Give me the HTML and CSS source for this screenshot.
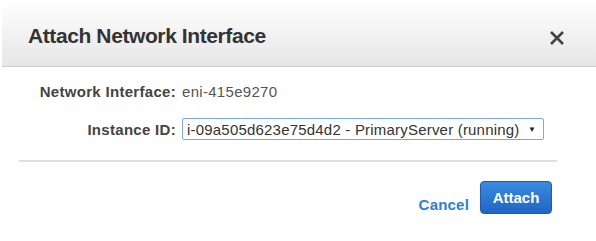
FILE: index.html
```html
<!DOCTYPE html>
<html lang="en">
<head>
<meta charset="UTF-8">
<title>Attach Network Interface</title>
<link rel="stylesheet" href="styles.css">
</head>
<body>

<div class="dialog">
  <div class="dialog-header">
    <h2>Attach Network Interface</h2>
    <span class="close">
      <svg width="16" height="16" viewBox="0 0 16 16"><path d="M2 2 L14 14 M14 2 L2 14" stroke="#444" stroke-width="2.6"/></svg>
    </span>
  </div>

  <div class="dialog-body">
    <div class="field">
      <span class="label">Network Interface:</span>
      <span class="value">eni-415e9270</span>
    </div>
    <div class="field">
      <label class="label" for="instance">Instance ID:</label>
      <div class="select-box" id="instance">
        <span>i-09a505d623e75d4d2 - PrimaryServer (running)</span>
        <span class="arrow">&#9660;</span>
      </div>
    </div>
  </div>

  <div class="dialog-footer">
    <a class="cancel" href="#">Cancel</a>
    <button type="button" class="attach">Attach</button>
  </div>
</div>

</body>
</html>
```

FILE: styles.css
```css
body {
  margin: 0;
  font-family: "Liberation Sans", Arial, sans-serif;
  background: #fff;
}
.dialog-header {
  height: 67px;
  box-sizing: border-box;
  margin-left: 2px;
  display: flex;
  align-items: center;
  justify-content: space-between;
  padding: 6px 31px 0 26px;
  background: linear-gradient(#ffffff, #e6e6e6);
  border-bottom: 1px solid #cfcfcf;
}
.dialog-header h2 {
  margin: 0;
  font-size: 21px;
  letter-spacing: -0.4px;
  font-weight: bold;
  color: #333;
}
.close {
  display: flex;
  padding-top: 4px;
}
.dialog-body {
  margin: 0 39px 0 19px;
  padding: 16px 0 20px;
  border-bottom: 2px solid #dedede;
}
.field {
  display: grid;
  grid-template-columns: 157px auto;
  column-gap: 6px;
  align-items: center;
  font-size: 15px;
  color: #444;
}
.field + .field {
  margin-top: 18px;
}
.label {
  text-align: right;
  font-weight: bold;
  letter-spacing: 0.3px;
}
.value {
  color: #555;
  letter-spacing: 0.3px;
}
.select-box {
  width: 362px;
  height: 22px;
  box-sizing: border-box;
  display: flex;
  align-items: center;
  justify-content: space-between;
  padding: 0 7px 0 4px;
  border: 1px solid #7aa7ea;
  border-radius: 2px;
  color: #333;
  letter-spacing: 0.2px;
}
.arrow {
  font-size: 8px;
  color: #222;
}
.dialog-footer {
  display: flex;
  justify-content: flex-end;
  align-items: center;
  gap: 11px;
  padding: 19px 44px 0 0;
}
.cancel {
  color: #2a80d6;
  font-weight: bold;
  font-size: 15px;
  letter-spacing: 0.2px;
  text-decoration: none;
  padding-top: 14px;
}
.attach {
  width: 72px;
  height: 33px;
  font-family: inherit;
  font-size: 15px;
  font-weight: bold;
  color: #fff;
  background: linear-gradient(#3a8ae0, #1f66c4);
  border: 1px solid #1a5cb0;
  border-radius: 4px;
}
```
